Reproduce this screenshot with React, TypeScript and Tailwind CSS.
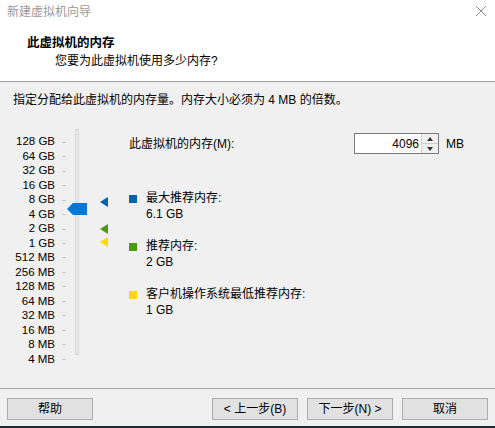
import React from "react";

const sizes = [
  "128 GB", "64 GB", "32 GB", "16 GB", "8 GB", "4 GB", "2 GB", "1 GB",
  "512 MB", "256 MB", "128 MB", "64 MB", "32 MB", "16 MB", "8 MB", "4 MB"
];

const font = { fontFamily: '"Liberation Sans", "Noto Sans CJK SC", sans-serif' };

export default function App() {
  return (
    <div
      className="relative flex h-[428px] w-[495px] flex-col overflow-hidden bg-[#f0f0f0] text-[12px] text-black"
      style={font}
    >
      <div className="h-[81px] bg-white">
        <div className="flex h-[24px] items-center justify-between pl-[7px] pr-[8px]">
          <span className="text-[12px] text-[#999999]">新建虚拟机向导</span>
          <svg width="12" height="12" viewBox="0 0 12 12" className="mt-[-2px]">
            <path d="M1 1 L11 11 M11 1 L1 11" stroke="#8a8a8a" strokeWidth="1" />
          </svg>
        </div>
        <div className="pl-[27px] pt-[11px]">
          <p className="text-[12.5px] font-bold leading-[17px]">此虚拟机的内存</p>
          <p className="pl-[28px] leading-[18px]">您要为此虚拟机使用多少内存?</p>
        </div>
      </div>
      <div className="h-px bg-[#a0a0a0]" />

      <div className="flex-1">
        <p className="pl-[13px] pt-[10px] leading-[16px]">指定分配给此虚拟机的内存量。内存大小必须为 4 MB 的倍数。</p>

        <div className="mt-[17px] flex">
          <div className="relative flex w-[120px]">
            <div className="flex w-[55px] flex-col items-end pt-[10px] text-[11.5px]">
              {sizes.map((s) => (
                <div key={s} className="flex h-[14.47px] items-center leading-none">
                  {s}
                </div>
              ))}
            </div>
            <div className="flex flex-col pl-[7px] pt-[10px]">
              {sizes.map((s) => (
                <div key={s} className="flex h-[14.47px] items-center">
                  <div className="h-px w-[4px] bg-[#c8c8c8]" />
                </div>
              ))}
            </div>
            <div className="ml-[9px] mt-[4px] h-[226px] w-[4px] border border-[#d6d6d6] bg-[#e7eaea]" />
            <svg width="20" height="12" viewBox="0 0 20 12" className="absolute left-[67px] top-[78px]">
              <path d="M0 6 L6 0 H20 V12 H6 Z" fill="#0078d7" />
            </svg>
            <svg width="8" height="10" viewBox="0 0 8 10" className="absolute left-[100px] top-[72px]">
              <path d="M0 5 L8 0 V10 Z" fill="#0063b1" />
            </svg>
            <svg width="8" height="10" viewBox="0 0 8 10" className="absolute left-[100px] top-[99px]">
              <path d="M0 5 L8 0 V10 Z" fill="#4c9a10" />
            </svg>
            <svg width="8" height="10" viewBox="0 0 8 10" className="absolute left-[100px] top-[112px]">
              <path d="M0 5 L8 0 V10 Z" fill="#ffd800" />
            </svg>
          </div>

          <div className="flex-1 pl-[9px] pt-[8px]">
            <div className="flex items-center">
              <span className="w-[225px]">此虚拟机的内存(M):</span>
              <div className="flex h-[21px] border border-[#7a7a7a] bg-white">
                <div className="flex w-[66px] items-center justify-end pr-[2px]">4096</div>
                <div className="flex w-[17px] flex-col border-l border-[#d0d0d0] bg-[#f0f0f0]">
                  <div className="flex flex-1 items-center justify-center border-b border-[#d0d0d0]">
                    <svg width="6" height="4" viewBox="0 0 6 4"><path d="M0 4 L3 0 L6 4 Z" fill="#333" /></svg>
                  </div>
                  <div className="flex flex-1 items-center justify-center">
                    <svg width="6" height="4" viewBox="0 0 6 4"><path d="M0 0 L3 4 L6 0 Z" fill="#333" /></svg>
                  </div>
                </div>
              </div>
              <span className="pl-[7px]">MB</span>
            </div>

            <div className="mt-[36px] flex flex-col gap-[16px]">
              <Legend color="bg-[#0063b1]" label="最大推荐内存:" value="6.1 GB" />
              <Legend color="bg-[#4c9a10]" label="推荐内存:" value="2 GB" />
              <Legend color="bg-[#ffd800]" label="客户机操作系统最低推荐内存:" value="1 GB" />
            </div>
          </div>
        </div>
      </div>

      <div className="h-px bg-[#a0a0a0]" />
      <div className="flex h-[39px] items-start pl-[7px] pt-[9px]">
        <Button label="帮助" />
        <div className="ml-[119px] flex gap-[9px]">
          <Button label="< 上一步(B)" />
          <Button label="下一步(N) >" />
          <Button label="取消" />
        </div>
      </div>
      <div className="absolute bottom-0 left-0 h-[2px] w-full bg-[#1e2a3a]" />
    </div>
  );
}

function Legend({ color, label, value }: { color: string; label: string; value: string }) {
  return (
    <div className="flex">
      <div className={`mt-[5px] h-[8px] w-[8px] ${color}`} />
      <div className="pl-[9px] leading-[16px]">
        <p>{label}</p>
        <p>{value}</p>
      </div>
    </div>
  );
}

function Button({ label }: { label: string }) {
  return (
    <div className="flex h-[22px] w-[86px] items-center justify-center border border-[#adadad] bg-[#e1e1e1]">
      {label}
    </div>
  );
}
